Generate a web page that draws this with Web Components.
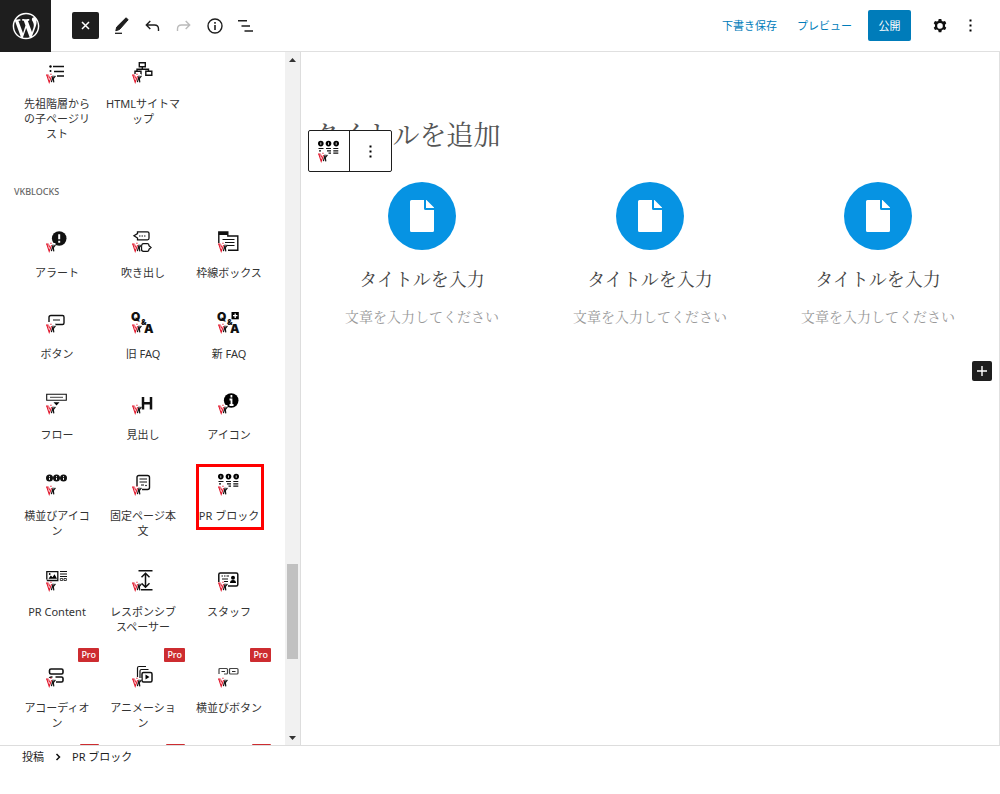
<!DOCTYPE html>
<html lang="ja">
<head>
<meta charset="utf-8">
<title>投稿を編集</title>
<style>
html,body{margin:0;height:100%}
body{font-family:"Noto Sans","Noto Sans CJK JP",sans-serif;font-size:11px;line-height:15px;color:#1e1e1e;background:#fff}
</style>
</head>
<body>
<editor-app></editor-app>
<script>
const VK = `<path fill="#fff" d="M0 12h9.500l-1 9H2z"/><g fill="none"><path stroke="#e2182d" stroke-width="1.100" d="M0 13h2.600M.8 13l2.400 7.300 2.400-6.200M2.700 13.600l.9 2.800M4.300 12.300h1.300"/><path stroke="#111" stroke-width="1.200" d="M7.200 13.600L5.400 20.200M9.400 13.800L7.300 16.700 7.800 20.300"/></g>`;
const disc = x => `<circle cx="${x}" cy="4" r="3.500" fill="#111"/><path d="M${x} 2.200v1M${x} 4v1.800" stroke="#fff" stroke-width="1"/>`;
const L = (d, w = 1.4, c = '#111') => `<path d="${d}" fill="none" stroke="${c}" stroke-width="${w}"/>`;
const T = (x, y, s, t) => `<text x="${x}" y="${y}" font-size="${s}" font-weight="900" font-family="Inter,sans-serif" fill="#111">${t}</text>`;
const ICONS = {
  list: L('M7 4.500h11M8 9.500h10M11 14h7') + '<circle cx="4.500" cy="4.500" r="1.200"/><circle cx="4.500" cy="9" r="1"/>',
  sitemap: L('M7.300.7h6v4h-6zM13.800 9.200h6v4h-6zM10.300 4.700v2.400M3 12V9.200h6v4M5 9V7.200h11.500V9', 1.4),
  alert: '<circle cx="13.200" cy="7.500" r="7.300" fill="#111"/><path d="M13.200 3.200v5M13.200 9.700v2" stroke="#fff" stroke-width="2"/>',
  balloon: L('M5.500.8h10q1.500 0 1.500 1.500v5q0 1.500-1.500 1.500h-10V7L2 4.800 5.500 2.600zM9.500 15q0-2.300 2-2.300h4q1.500 0 1.500 2l2 1.800-2 1.800q0 2-1.500 2h-4q-2 0-2-2z', 1.300) + L('M7 5h1.500M9.500 5H11M12 5h1.500', 1),
  framebox: L('M.8 13V1h9v4h10v14.300H10', 1.4) + L('M.8 2.500h9', 3) + L('M4.500 8.500h12M7 11.500h9.500M9 14.500h7.500', 1),
  button: L('M3 10V5.500q0-2 2-2h11.500q1.500 0 1.500 1.500v6q0 1.500-1.500 1.500H9', 1.4) + L('M7 8h7', 1),
  faq: T(-1, 9, 12, 'Q') + T(9, 13, 8, '&amp;') + T(12, 20.500, 12, 'A'),
  newfaq: T(-1, 9, 12, 'Q') + T(9, 13, 8, '&amp;') + T(12, 20.500, 12, 'A') + '<path d="M13.500 0h7.300v7.300h-7.300z"/><path d="M17.200 1.500v4.400M15 3.700h4.400" stroke="#fff" stroke-width="1.300"/>',
  flow: L('M.7 1.200h19.600v6.100H.7z', 1.1) + L('M4 4.300h13', .8) + '<path d="M7.500 9.200h6L10.500 12.500z"/>',
  heading: L('M11 4v12.500M19 4v12.500M11 10.200h8', 2.5),
  info: '<circle cx="13.200" cy="7.500" r="7.300"/><path d="M13.400 2v2.400M11.500 6.500h2v5.500M11.500 12h4" stroke="#fff" stroke-width="1.800" fill="none"/>',
  icons3: disc(3.500) + disc(10.500) + disc(17.500),
  page: L('M5 12V3.500q0-2 2-2h8.500q2 0 2 2v10q0 2-2 2H10', 1.4) + L('M7.500 5h7.500M7.500 8h7.500M9 11h3', 1.100) + '<circle cx="14" cy="11.500" r=".8"/>',
  pr: [2.8, 10.5, 18.2].map(x => `<circle cx="${x}" cy="2.600" r="2.800"/><path d="M${x} 1.500v2.300" stroke="#fff" stroke-width=".8"/>`).join('') + L('M.5 7.500h5M8 7.500h5M15.300 7.500h5M15.300 9.800h5M15.300 12.100h5M9 9.800h4M10.500 12.100H13M1 9.800h2', 1.200),
  content: L('M.8 9.500V1.700h11v8.800H.8', 1.300) + '<path d="M2.500 8.800l2.300-3.300L6.500 7.300l2-3 2.500 4.500z"/><circle cx="3.700" cy="4" r=".9"/>' + L('M14 1.500h7M14 4h7M14 6.500h7', 1) + L('M14.300 8.500h2.400v2h-2.400zM18 8.500h2.400v2H18z', .8),
  spacer: L('M6.500.7h14M9 19.800h11.500', 1.400) + L('M13.500 3.200v14M9.500 7.200l4-4 4 4M9.500 13.200l4 4 4-4', 1.500),
  staff: L('M.8 12V4.500q0-1.500 1.500-1.500h16q1.500 0 1.500 1.500v10q0 1.500-1.500 1.500H10', 1.500) + L('M3.500 6h1.500M6 6h1.500M8.500 6h2.500M4 9h6M6 11.500h4', 1.100) + '<circle cx="15" cy="7.800" r="2"/><path d="M12 13q0-3 3-3t3 3z"/>',
  accordion: L('M5 3h10.500q1.500 0 1.500 1.500v2q0 1.500-1.500 1.500H5Q3.500 8 3.500 6.500v-2Q3.500 3 5 3zM9.500 11h6q1.500 0 1.500 1.500v2q0 1.500-1.500 1.500H10M3.500 13q0-2 2-2h1', 1.600),
  animation: L('M5.500 11V2q0-1.500 1.500-1.500h7M8 12V5q0-1.500 1.500-1.500h7', 1.200) + L('M11.500 6.500h7q1.500 0 1.500 1.500v6.500q0 1.500-1.500 1.500h-7q-1.500 0-1.500-1.500V8q0-1.500 1.500-1.500z', 1.500) + '<path d="M13.500 8.500v5l4-2.500z"/>',
  buttons: L('M1 8V3.500q0-1 1-1h6.500q1 0 1 1V7q0 1-1 1H6M12.500 2.500H19q1 0 1 1V7q0 1-1 1h-6.500q-1 0-1-1V3.500q0-1 1-1z', 1.200, '#444') + L('M3.500 5.500H7M14 5.500h3.500', .9)
};

function define(name, html) {
  customElements.define(name, class extends HTMLElement {
    constructor() {
      super();
      this.attachShadow({mode: 'open'});
    }
    connectedCallback() {
      this.shadowRoot.innerHTML = typeof html === 'function' ? html(this) : html;
    }
  });
}

define('vk-icon', el => `<style>:host{display:block;width:22px;height:21px}svg{display:block;overflow:visible}</style>
<svg width="21" height="21" viewBox="0 0 21 21" aria-hidden="true">${ICONS[el.getAttribute('name')]}${VK}</svg>`);

/* pro="loading" shows the badge before its text has arrived */
define('block-item', el => `<style>
:host{display:block;position:relative}
button{display:flex;flex-direction:column;align-items:center;gap:13px;width:100%;border:0;margin:0;padding:10px 5px 22px;background:none;font:inherit;color:#333;text-align:center}
.label{display:block;overflow-wrap:anywhere;word-break:break-all;line-break:loose}
.words{word-break:normal}
.pro{position:absolute;top:-8px;right:1px;box-sizing:border-box;min-width:19px;height:14px;padding:0 3px;background:#cd2c30;color:#fff;font-size:9px;font-weight:500;line-height:14px;border-radius:1px}
.mark{position:absolute;top:0;left:10px;right:8px;height:60px;border:3px solid #f00;pointer-events:none}
</style>
<button type="button"><vk-icon name="${el.getAttribute('icon')}"></vk-icon><span class="label"><slot></slot></span></button>
${el.hasAttribute('pro') ? `<span class="pro">${el.getAttribute('pro') === 'loading' ? '' : 'Pro'}</span>` : ''}${el.hasAttribute('marked') ? '<span class="mark"></span>' : ''}`);

define('block-category', el => `<style>
:host{display:block}
h2{margin:0;font-size:9px;font-weight:500;line-height:58px;color:#666}
.grid{display:grid;grid-template-columns:repeat(3,1fr)}
</style>
${el.getAttribute('heading') ? `<h2>${el.getAttribute('heading')}</h2>` : ''}<div class="grid"><slot></slot></div>`);

define('scroll-rail', `<style>
:host{display:flex;flex-direction:column;align-items:center;width:15px;background:#f1f1f1}
i{display:flex;align-items:center;justify-content:center;height:15px;width:15px}
.before{flex:497}.thumb{flex:95;width:11px;background:#c1c1c1}.after{flex:71}
</style>
<i><svg width="7" height="4"><path d="M0 4L3.500 0 7 4z" fill="#333"/></svg></i>
<div class="before"></div><div class="thumb"></div><div class="after"></div>
<i><svg width="7" height="4"><path d="M0 0l3.500 4L7 0z" fill="#333"/></svg></i>`);

define('block-inserter', `<style>
:host{display:flex;min-height:0;border-right:1px solid #ddd}
.list{flex:1;min-width:0;overflow:hidden;padding:0 13px 0 14px}
</style>
<div class="list">
<block-category>
<block-item icon="list">先祖階層からの子ページリスト</block-item>
<block-item icon="sitemap">HTMLサイトマップ</block-item>
</block-category>
<block-category heading="VKBLOCKS">
<block-item icon="alert">アラート</block-item>
<block-item icon="balloon">吹き出し</block-item>
<block-item icon="framebox">枠線ボックス</block-item>
<block-item icon="button">ボタン</block-item>
<block-item icon="faq">旧 FAQ</block-item>
<block-item icon="newfaq">新 FAQ</block-item>
<block-item icon="flow">フロー</block-item>
<block-item icon="heading">見出し</block-item>
<block-item icon="info">アイコン</block-item>
<block-item icon="icons3">横並びアイコン</block-item>
<block-item icon="page">固定ページ本文</block-item>
<block-item icon="pr" marked>PR ブロック</block-item>
<block-item icon="content">PR Content</block-item>
<block-item icon="spacer">レスポンシブスペーサー</block-item>
<block-item icon="staff">スタッフ</block-item>
<block-item icon="accordion" pro>アコーディオン</block-item>
<block-item icon="animation" pro>アニメーション</block-item>
<block-item icon="buttons" pro>横並びボタン</block-item>
<block-item icon="list" pro="loading"></block-item>
<block-item icon="page" pro="loading"></block-item>
<block-item icon="content" pro="loading"></block-item>
</block-category>
</div>
<scroll-rail></scroll-rail>`);

define('editor-header', `<style>
:host{display:flex;align-items:center;height:51px;border-bottom:1px solid #e0e0e0;background:#fff}
a.logo{display:flex;align-items:center;justify-content:center;width:51px;height:52px;background:#1e1e1e;align-self:flex-start}
button{display:flex;align-items:center;justify-content:center;border:0;margin:0;padding:0;background:none;font:inherit;color:#1e1e1e;height:31px;width:31px}
svg{display:block}
.tools{display:flex;align-items:center;padding-left:21px}
.tools .close{width:27px;height:27px;background:#1e1e1e;border-radius:2px;margin-right:7px}
.actions{display:flex;align-items:center;margin-left:auto;padding-right:14px}
.actions .text{width:auto;color:#007cba;margin-right:20px}
.actions .text + .text{margin-right:16px}
.actions .publish{width:43px;background:#007cba;color:#fff;border-radius:2px;margin-right:13px}
</style>
<a class="logo" href="#" aria-label="投稿一覧"><svg width="32" height="32" viewBox="-2 -2 24 24" fill="#fff"><path d="M20 10c0-5.510-4.490-10-10-10C4.480 0 0 4.490 0 10c0 5.520 4.480 10 10 10 5.510 0 10-4.480 10-10zM7.780 15.370L4.370 6.220c.55-.02 1.170-.08 1.170-.08.5-.06.44-1.130-.06-1.110 0 0-1.450.11-2.370.11-.18 0-.37 0-.58-.01C4.120 2.690 6.870 1.110 10 1.110c2.330 0 4.450.87 6.050 2.340-.68-.11-1.650.39-1.650 1.580 0 .74.45 1.360.9 2.100.35.61.55 1.360.55 2.460 0 1.490-1.400 5-1.400 5l-3.030-8.370c.54-.02.82-.17.82-.17.5-.05.44-1.250-.06-1.220 0 0-1.440.12-2.380.12-.87 0-2.330-.12-2.330-.12-.5-.03-.56 1.200-.06 1.220l.92.08 1.260 3.410zM17.410 10c.24-.64.74-1.870.43-4.250.7 1.290 1.050 2.710 1.050 4.250 0 3.290-1.730 6.240-4.400 7.780.97-2.590 1.940-5.200 2.920-7.780zM6.100 18.090C3.120 16.650 1.110 13.530 1.110 10c0-1.300.23-2.480.72-3.590C3.250 10.300 4.670 14.200 6.100 18.090zm4.030-6.630l2.580 6.980c-.86.29-1.760.45-2.710.45-.79 0-1.570-.11-2.290-.33.81-2.380 1.620-4.740 2.420-7.100z"/></svg></a>
<div class="tools">
<button class="close" aria-label="ブロック挿入を閉じる"><svg width="9" height="9" viewBox="0 0 9 9"><path d="M1 1l7 7M8 1L1 8" stroke="#fff" stroke-width="1.500"/></svg></button>
<button aria-label="編集"><svg width="15" height="18" viewBox="0 0 15 18"><path d="M12 .8l2.200 1.900-8.700 9.800-3.700 1.300.9-3.700z" fill="#1e1e1e" stroke="#1e1e1e"/><path d="M1 16.300h7" stroke="#1e1e1e" stroke-width="1.300"/></svg></button>
<button aria-label="元に戻す"><svg width="15" height="12" viewBox="0 0 15 12" fill="none" stroke="#1e1e1e" stroke-width="1.400"><path d="M5.300 1L1.300 5l4 4M1.300 5H9.500q4 0 4 4v2"/></svg></button>
<button aria-label="やり直す"><svg width="15" height="12" viewBox="0 0 15 12" fill="none" stroke="#bbb" stroke-width="1.400"><path d="M9.700 1l4 4-4 4M13.700 5H5.500q-4 0-4 4v2"/></svg></button>
<button aria-label="詳細"><svg width="16" height="16" viewBox="0 0 16 16" fill="none" stroke="#1e1e1e" stroke-width="1.400"><circle cx="8" cy="8" r="7"/><path d="M8 4v1.800M8 7v5" stroke-width="1.600"/></svg></button>
<button aria-label="リスト表示"><svg width="17" height="12" viewBox="0 0 17 12" stroke="#1e1e1e" stroke-width="1.400"><path d="M1 .8h9M4.500 6H13M7.500 11H16"/></svg></button>
</div>
<div class="actions">
<button class="text">下書き保存</button><button class="text">プレビュー</button><button class="publish">公開</button>
<button aria-label="設定"><svg width="14" height="14" viewBox="0 0 14 14"><path fill="#111" fill-rule="evenodd" d="M5.700 0h2.600l.5 1.900 1.300.7 1.900-.5 1.300 2.200-1.300 1.500v1.600l1.300 1.400-1.300 2.300-1.900-.6-1.300.8-.5 2h-2.600l-.5-2-1.300-.8-1.900.6-1.300-2.300L2 7.400V5.800L.7 4.300 2 2.100l1.900.5 1.300-.7zM7 4.100a2.800 2.800 0 1 0 0 5.600 2.800 2.800 0 0 0 0-5.600z"/></svg></button>
<button aria-label="オプション"><svg width="3" height="13" viewBox="0 0 3 13"><path d="M.5.500h2v2h-2zM.5 5.500h2v2h-2zM.5 10.500h2v2h-2z"/></svg></button>
</div>`);

define('pr-column', `<style>
:host{display:flex;flex-direction:column;align-items:center;font-family:"Noto Serif CJK JP","Noto Sans CJK JP",serif;text-align:center}
.disc{display:flex;align-items:center;justify-content:center;width:68px;height:68px;border-radius:50%;background:#0693e3}
h3{margin:15px 0 0;font-size:18px;font-weight:400;line-height:26px;color:#444}
p{margin:15px 0 0;font-size:14px;line-height:20px;color:#999}
</style>
<span class="disc"><svg width="24" height="32" viewBox="0 0 24 32" fill="#fff"><path d="M1.500 0H14v8.500q0 1.500 1.500 1.500H24v20.500q0 1.500-1.500 1.500h-21Q0 32 0 30.500v-29Q0 0 1.500 0zM16 0h.500L24 7.500V8h-8z"/></svg></span>
<h3>タイトルを入力</h3><p>文章を入力してください</p>`);

define('block-toolbar', `<style>
:host{display:flex;border:1px solid #1e1e1e;border-radius:2px;background:#fff}
button{display:flex;align-items:center;justify-content:center;width:40px;height:40px;border:0;padding:0;margin:0;background:none}
button + button{width:42px;border-left:1px solid #1e1e1e}
</style>
<button aria-label="PR ブロック"><vk-icon name="pr"></vk-icon></button>
<button aria-label="オプション"><svg width="3" height="13" viewBox="0 0 3 13"><path d="M.5.500h2v2h-2zM.5 5.500h2v2h-2zM.5 10.500h2v2h-2z"/></svg></button>`);

define('editor-canvas', `<style>
:host{display:block;min-width:0;padding:62px 7px 0;border-right:1px solid #e0e0e0}
.head{position:relative;padding-left:4px}
h1{margin:0;font-family:"Noto Serif CJK JP","Noto Sans CJK JP",serif;font-size:27px;font-weight:400;line-height:40px;color:#555}
block-toolbar{position:absolute;left:0;top:16px}
.columns{display:grid;grid-template-columns:repeat(3,1fr);margin-top:28px}
.add{display:flex;align-items:center;justify-content:center;width:20px;height:20px;margin:35px 0 0 auto;padding:0;border:0;border-radius:2px;background:#1e1e1e}
</style>
<div class="head"><h1>タイトルを追加</h1><block-toolbar></block-toolbar></div>
<div class="columns"><pr-column></pr-column><pr-column></pr-column><pr-column></pr-column></div>
<button class="add" aria-label="ブロックを追加"><svg width="10" height="10"><path d="M5 0v10M0 5h10" stroke="#fff" stroke-width="1.400"/></svg></button>`);

define('editor-footer', `<style>
:host{display:block;height:48px;border-top:1px solid #ddd}
nav{display:flex;align-items:center;gap:11px;padding:3px 22px;line-height:16px}
a{color:inherit;text-decoration:none}
</style>
<nav aria-label="パンくずリスト"><a href="#">投稿</a><svg width="6" height="8" viewBox="0 0 6 8"><path d="M1.500 1l3 3-3 3" fill="none" stroke="#111" stroke-width="1.500"/></svg><span>PR ブロック</span></nav>`);

define('editor-app', `<style>
:host{display:flex;flex-direction:column;height:100vh}
.body{flex:1;min-height:0;display:grid;grid-template-columns:301px 1fr;grid-template-rows:minmax(0,1fr)}
</style>
<editor-header></editor-header>
<div class="body"><block-inserter></block-inserter><editor-canvas></editor-canvas></div>
<editor-footer></editor-footer>`);
</script>
</body>
</html>
